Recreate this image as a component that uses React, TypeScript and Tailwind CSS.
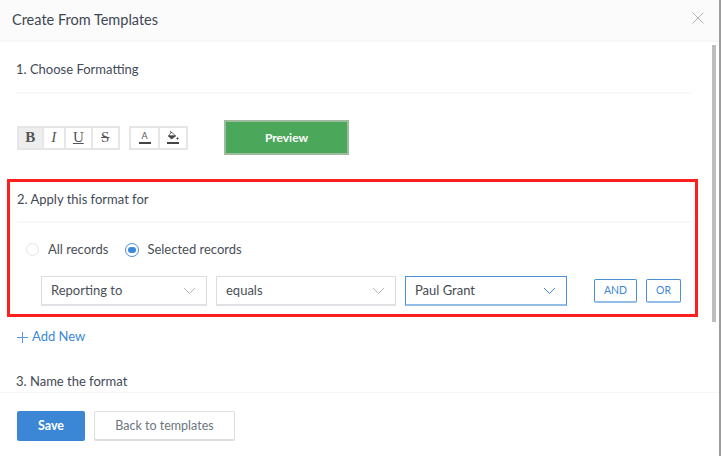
import React from "react";

const font = { fontFamily: '"Lato", "Liberation Sans", sans-serif' };

function Chevron({ color }: { color: string }) {
  return (
    <svg width="13" height="8" viewBox="0 0 13 8" fill="none" stroke={color} strokeWidth="1">
      <path d="M1 1l5.5 5.5L12 1" />
    </svg>
  );
}

function Select({ label, width, active }: { label: string; width: string; active?: boolean }) {
  return (
    <div
      className={`${width} h-[30px] flex items-center justify-between pl-[9px] pr-[10px] text-[13px] border ${
        active ? "border-[#4a90d9] border-b-2 border-b-[#93bde9] text-[#444a52]" : "border-[#dcdcdc] border-b-2 border-b-[#dfe1e5] text-[#4a4f57]"
      }`}
    >
      <span className="pt-[1px]">{label}</span>
      <Chevron color={active ? "#4a90d9" : "#b5b5b5"} />
    </div>
  );
}

function ToolBtn({ children, w, active }: { children: React.ReactNode; w: string; active?: boolean }) {
  return (
    <div className={`${w} h-full flex items-center justify-center border-r-2 last:border-r-0 border-[#e6e6e6] ${active ? "bg-[#eeeeee]" : ""}`}>
      {children}
    </div>
  );
}

const serif = "font-['Liberation_Serif'] text-[15px] leading-none text-[#555]";

export default function App() {
  return (
    <div className="w-[721px] h-[456px] flex bg-white overflow-hidden" style={font}>
      <div className="w-[719px] h-full flex flex-col">
        <header className="h-[42px] shrink-0 flex items-center justify-between pl-3 pr-[15px] bg-[#fbfbfb] border-b-2 border-[#f6f6f6]">
          <h1 className="text-[14.5px] text-[#3f4755]">Create From Templates</h1>
          <svg width="12" height="12" viewBox="0 0 12 12" stroke="#b4b4b4" strokeWidth="1" className="mb-[4px]">
            <path d="M.5.5l11 11M11.5.5l-11 11" />
          </svg>
        </header>

        <div className="flex-1 min-h-0 overflow-hidden relative">
          <div className="absolute right-[3px] top-[3px] w-[4px] h-[277px] bg-[#bdbdbd]" />

          <section className="pl-[16px] pr-[28px]">
            <div className="h-[52px] flex items-center border-b-2 border-[#f8f8f8] text-[13px] text-[#434a57] pt-[6px]">
              1. Choose Formatting
            </div>
          </section>

          <div className="flex items-center pl-[17px] mt-[26px] h-[35px]">
            <div className="flex h-[24px] border-2 border-[#e6e6e6] w-[103px]">
              <ToolBtn w="w-[25px]" active><span className={`${serif} font-bold`}>B</span></ToolBtn>
              <ToolBtn w="w-[23px]"><span className={`${serif} italic`}>I</span></ToolBtn>
              <ToolBtn w="w-[27px]"><span className={`${serif} underline`}>U</span></ToolBtn>
              <ToolBtn w="w-[26px]"><span className={`${serif} line-through`}>S</span></ToolBtn>
            </div>
            <div className="flex h-[24px] border-2 border-[#e6e6e6] w-[59px] ml-[9px]">
              <ToolBtn w="w-[29px]">
                <div className="flex flex-col items-center">
                  <span className="text-[9px] leading-[10px] text-[#555]">A</span>
                  <span className="w-[12px] h-[2px] bg-[#444] mt-[1px]" />
                </div>
              </ToolBtn>
              <ToolBtn w="w-[26px]">
                <div className="flex flex-col items-center">
                  <svg width="12" height="10" viewBox="0 0 12 10" fill="#444" stroke="#444" strokeWidth="0.8">
                    <path d="M4.5 1l4 4H1.5z" fill="none" />
                    <path d="M1.5 5l3 3 4-3z" />
                    <path d="M3 0l1.5 2" fill="none" />
                    <circle cx="10.5" cy="7.5" r="0.7" />
                  </svg>
                  <span className="w-[12px] h-[2px] bg-[#444] mt-[1px]" />
                </div>
              </ToolBtn>
            </div>
            <button className="ml-[36px] w-[125px] h-[35px] bg-[#4ba85a] border-2 border-[#9dbc9f] text-white text-[12px] font-bold">
              Preview
            </button>
          </div>

          <section className="mt-[24px] ml-[7px] w-[691px] h-[138px] border-[3px] border-[#ff1f1f] pl-[7px] pr-[3px]">
            <div className="h-[41px] flex items-center border-b-2 border-[#f8f8f8] text-[13px] text-[#434a57] pb-[4px]">
              2. Apply this format for
            </div>
            <div className="flex items-center h-[53px] pl-[9px] text-[13px] text-[#4a4f57]">
              <span className="w-[13px] h-[13px] rounded-full border border-[#dfe3e8]" />
              <span className="ml-[9px]">All records</span>
              <span className="ml-[17px] w-[14px] h-[14px] rounded-full border border-[#4a90d9] flex items-center justify-center">
                <span className="w-[8px] h-[6px] rounded-full bg-[#3b87d8]" />
              </span>
              <span className="ml-[8px]">Selected records</span>
            </div>
            <div className="flex items-start pl-[24px]">
              <Select label="Reporting to" width="w-[166px]" />
              <div className="ml-[9px]"><Select label="equals" width="w-[180px]" /></div>
              <div className="ml-[9px]"><Select label="Paul Grant" width="w-[162px]" active /></div>
              <button className="ml-[27px] mt-[3px] w-[43px] h-[24px] rounded-[2px] border border-[#4a90d9] border-b-2 border-b-[#93bde9] text-[#3b87d8] text-[10.5px]">AND</button>
              <button className="ml-[9px] mt-[3px] w-[35px] h-[24px] rounded-[2px] border border-[#4a90d9] border-b-2 border-b-[#93bde9] text-[#3b87d8] text-[10.5px]">OR</button>
            </div>
          </section>

          <div className="flex items-center gap-[4px] pl-[17px] mt-[10px] h-[20px] text-[13px] text-[#3b87d8]">
            <svg width="11" height="11" viewBox="0 0 11 11" stroke="#5a9bdf" strokeWidth="1">
              <path d="M5.5 0v11M0 5.5h11" />
            </svg>
            <span>Add New</span>
          </div>

          <div className="pl-[16px] mt-[25px] h-[20px] flex items-center text-[13px] text-[#434a57]">3. Name the format</div>
        </div>

        <footer className="h-[64px] shrink-0 flex items-start pl-[17px] pt-[18px] bg-white border-t border-[#f6f6f6]">
          <button className="w-[68px] h-[30px] rounded-[2px] bg-[#3b87d6] text-white text-[12.5px] font-bold">Save</button>
          <button className="ml-[9px] w-[141px] h-[30px] rounded-[2px] border border-[#dedede] border-b-2 text-[#6c7680] text-[12.5px] pt-[1px]">Back to templates</button>
        </footer>
      </div>
      <div className="w-[2px] h-full bg-[#9c9c9c]" />
    </div>
  );
}
